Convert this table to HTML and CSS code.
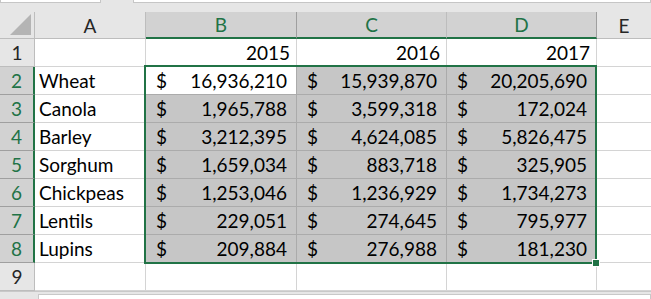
FILE: index.html
```html
<!DOCTYPE html>
<html lang="en">
  <head>
    <meta charset="UTF-8" />
    <title>Crop values</title>
    <link rel="stylesheet" href="styles.css">
  </head>
  <body>
    <div class="sheet">
      <!-- formula bar strip -->
      <div class="topbar">
        <div class="namebox"></div>
        <div class="fx"></div>
      </div>

      <!-- column headers -->
      <div class="corner"><div class="tri"></div></div>
      <div class="colhead">A</div>
      <div class="colhead sel">B</div>
      <div class="colhead sel">C</div>
      <div class="colhead sel">D</div>
      <div class="colhead last">E</div>

      <!-- row 1 -->
      <div class="rowhead">1</div>
      <div class="cell"></div>
      <div class="cell num">2015</div>
      <div class="cell num">2016</div>
      <div class="cell num">2017</div>
      <div class="cell last"></div>

      <div class="rowhead sel">2</div>
      <div class="cell">Wheat</div>
      <div class="cell acc active"><span>$</span><span>16,936,210</span></div>
      <div class="cell acc in"><span>$</span><span>15,939,870</span></div>
      <div class="cell acc in"><span>$</span><span>20,205,690</span></div>
      <div class="cell last"></div>

      <div class="rowhead sel">3</div>
      <div class="cell">Canola</div>
      <div class="cell acc in"><span>$</span><span>1,965,788</span></div>
      <div class="cell acc in"><span>$</span><span>3,599,318</span></div>
      <div class="cell acc in"><span>$</span><span>172,024</span></div>
      <div class="cell last"></div>

      <div class="rowhead sel">4</div>
      <div class="cell">Barley</div>
      <div class="cell acc in"><span>$</span><span>3,212,395</span></div>
      <div class="cell acc in"><span>$</span><span>4,624,085</span></div>
      <div class="cell acc in"><span>$</span><span>5,826,475</span></div>
      <div class="cell last"></div>

      <div class="rowhead sel">5</div>
      <div class="cell">Sorghum</div>
      <div class="cell acc in"><span>$</span><span>1,659,034</span></div>
      <div class="cell acc in"><span>$</span><span>883,718</span></div>
      <div class="cell acc in"><span>$</span><span>325,905</span></div>
      <div class="cell last"></div>

      <div class="rowhead sel">6</div>
      <div class="cell">Chickpeas</div>
      <div class="cell acc in"><span>$</span><span>1,253,046</span></div>
      <div class="cell acc in"><span>$</span><span>1,236,929</span></div>
      <div class="cell acc in"><span>$</span><span>1,734,273</span></div>
      <div class="cell last"></div>

      <div class="rowhead sel">7</div>
      <div class="cell">Lentils</div>
      <div class="cell acc in"><span>$</span><span>229,051</span></div>
      <div class="cell acc in"><span>$</span><span>274,645</span></div>
      <div class="cell acc in"><span>$</span><span>795,977</span></div>
      <div class="cell last"></div>

      <div class="rowhead sel">8</div>
      <div class="cell">Lupins</div>
      <div class="cell acc in"><span>$</span><span>209,884</span></div>
      <div class="cell acc in"><span>$</span><span>276,988</span></div>
      <div class="cell acc in"><span>$</span><span>181,230</span></div>
      <div class="cell last"></div>

      <div class="rowhead">9</div>
      <div class="cell"></div>
      <div class="cell"></div>
      <div class="cell"></div>
      <div class="cell"></div>
      <div class="cell last"></div>

      <!-- sheet tabs strip -->
      <div class="bottombar"><div class="tabs"></div></div>

      <!-- selection outline B2:D8, drawn over the cells -->
      <div class="selection"><div class="handle"></div></div>
    </div>
  </body>
</html>
```

FILE: styles.css
```css
:root {
  --green: #217346;
  --chrome: #e6e6e6;
  --grid: #d4d4d4;
  --sel-bg: #c6c6c6;
  --sel-grid: #ababab;
}
body {
  margin: 0;
  background: var(--chrome);
  font-family: "Lato", "Open Sans", sans-serif;
  font-size: 19px;
  color: #000;
  overflow: hidden;
}
.sheet {
  position: relative;
  display: grid;
  grid-template-columns: 35px 111px 151px 150px 150px 1fr;
  grid-template-rows: 12px 27px repeat(9, 28px) 1fr;
  width: 651px;
  height: 299px;
}
.topbar {
  grid-column: 1 / -1;
  display: flex;
  gap: 32px;
  align-items: flex-start;
  background: var(--chrome);
}
.namebox,
.fx {
  height: 2px;
  background: #fff;
  border: 1px solid #c6c6c6;
  border-top: none;
}
.namebox {
  width: 99px;
}
.fx {
  flex: 1;
}
.corner {
  background: var(--chrome);
  border-right: 1px solid #bdbdbd;
  border-bottom: 1px solid #bdbdbd;
  display: flex;
  justify-content: flex-end;
  align-items: flex-end;
  padding: 0 3px 3px 0;
  box-sizing: border-box;
}
.tri {
  width: 21px;
  height: 21px;
  background: #b4b4b4;
  clip-path: polygon(100% 0, 100% 100%, 0 100%);
}
.colhead {
  background: var(--chrome);
  border-right: 1px solid #bdbdbd;
  border-bottom: 1px solid #bdbdbd;
  display: flex;
  align-items: center;
  justify-content: center;
  color: #262626;
  box-sizing: border-box;
}
.colhead.sel {
  background: #d2d2d2;
  color: var(--green);
  border-right-color: #9f9f9f;
  border-bottom: 2px solid var(--green);
}
.colhead.sel:nth-child(5) {
  border-right-color: #bdbdbd;
}
.colhead.last,
.cell.last {
  border-right: none;
}
.rowhead {
  background: var(--chrome);
  border-right: 1px solid #bdbdbd;
  border-bottom: 1px solid #bdbdbd;
  display: flex;
  align-items: center;
  justify-content: center;
  color: #262626;
  box-sizing: border-box;
}
.rowhead.sel {
  background: #d2d2d2;
  color: var(--green);
  border-bottom-color: #9f9f9f;
  border-right: 2px solid var(--green);
}
.cell {
  background: #fff;
  border-right: 1px solid var(--grid);
  border-bottom: 1px solid var(--grid);
  display: flex;
  align-items: center;
  padding: 0 4px;
  box-sizing: border-box;
  white-space: nowrap;
}
.num {
  justify-content: flex-end;
  padding-right: 6px;
}
.acc {
  justify-content: space-between;
  padding: 0 9px 0 10px;
}
.cell.in {
  background: var(--sel-bg);
  border-color: var(--sel-grid);
}
.cell.active {
  background: #fff;
  border-color: var(--sel-grid);
}
.selection {
  position: absolute;
  left: 144px;
  top: 65px;
  width: 449px;
  height: 195px;
  border: 2px solid var(--green);
  pointer-events: none;
}
.handle {
  position: absolute;
  right: -5px;
  bottom: -5px;
  width: 6px;
  height: 6px;
  background: var(--green);
  border: 1px solid #fff;
}
.bottombar {
  grid-column: 1 / -1;
  background: var(--chrome);
  border-top: 1px solid #c8c8c8;
  padding: 2px 0 0 38px;
}
.tabs {
  height: 10px;
  background: #fff;
  border: 1px solid #c8c8c8;
}
```
